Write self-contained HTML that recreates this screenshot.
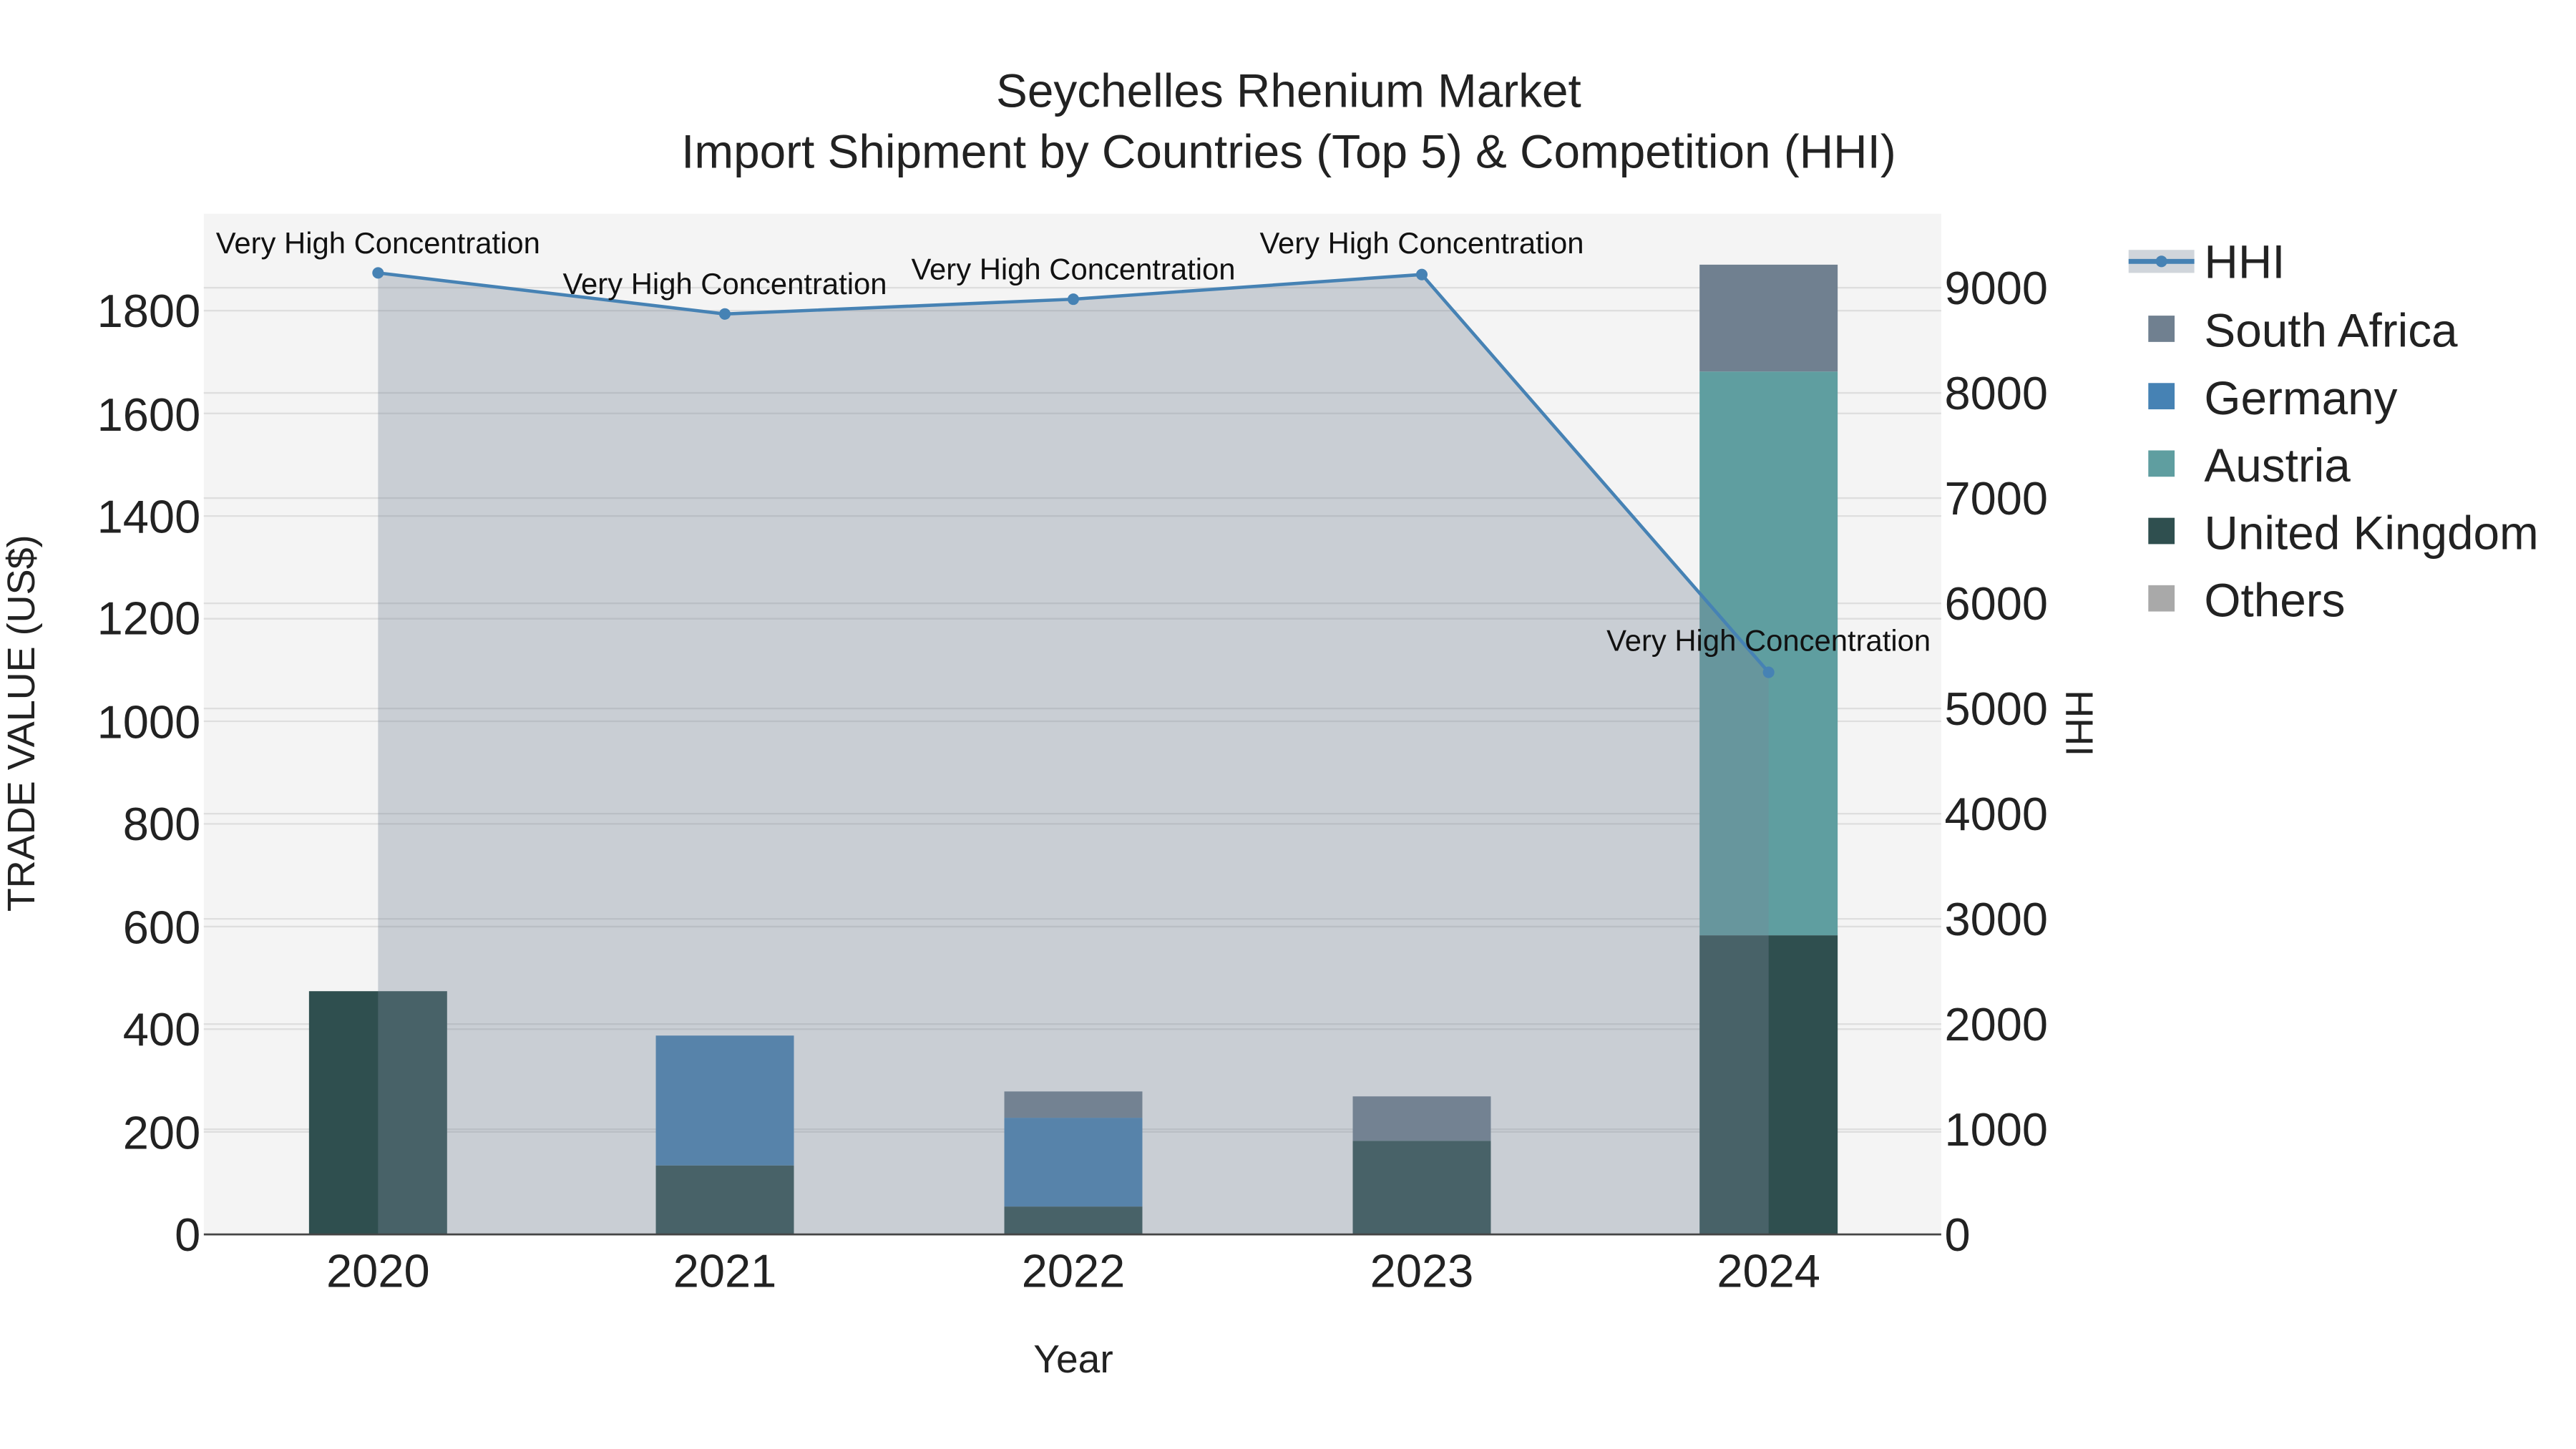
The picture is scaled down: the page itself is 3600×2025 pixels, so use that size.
<!DOCTYPE html>
<html><head><meta charset="utf-8"><style>
html,body{margin:0;padding:0;background:#fff;}
svg{display:block;font-family:"Liberation Sans",Arial,sans-serif;}
</style></head><body>
<svg width="3600" height="2025" viewBox="0 0 1567.2 881.5" xmlns="http://www.w3.org/2000/svg">
<rect x="0" y="0" width="1570" height="885" fill="#fff"/>
<rect x="124" y="130" width="1057" height="621" fill="#f4f4f4"/>
<g stroke="#dedede" stroke-width="1">
<line x1="124" x2="1181" y1="688.6" y2="688.6"/><line x1="124" x2="1181" y1="626.1" y2="626.1"/>
<line x1="124" x2="1181" y1="563.7" y2="563.7"/><line x1="124" x2="1181" y1="501.2" y2="501.2"/>
<line x1="124" x2="1181" y1="438.8" y2="438.8"/><line x1="124" x2="1181" y1="376.4" y2="376.4"/>
<line x1="124" x2="1181" y1="313.9" y2="313.9"/><line x1="124" x2="1181" y1="251.5" y2="251.5"/>
<line x1="124" x2="1181" y1="189" y2="189"/>
<line x1="124" x2="1181" y1="687" y2="687"/><line x1="124" x2="1181" y1="623" y2="623"/>
<line x1="124" x2="1181" y1="559" y2="559"/><line x1="124" x2="1181" y1="495" y2="495"/>
<line x1="124" x2="1181" y1="431" y2="431"/><line x1="124" x2="1181" y1="367" y2="367"/>
<line x1="124" x2="1181" y1="303" y2="303"/><line x1="124" x2="1181" y1="239" y2="239"/>
<line x1="124" x2="1181" y1="175" y2="175"/>
</g>
<rect x="188" y="603" width="84" height="148" fill="#2f4f4f"/>
<rect x="399" y="709" width="84" height="42" fill="#2f4f4f"/>
<rect x="399" y="630" width="84" height="79" fill="#4682b4"/>
<rect x="611" y="734" width="84" height="17" fill="#2f4f4f"/>
<rect x="611" y="680" width="84" height="54" fill="#4682b4"/>
<rect x="611" y="664" width="84" height="16" fill="#708090"/>
<rect x="823" y="694" width="84" height="57" fill="#2f4f4f"/>
<rect x="823" y="667" width="84" height="27" fill="#708090"/>
<rect x="1034" y="569" width="84" height="182" fill="#2f4f4f"/>
<rect x="1034" y="226" width="84" height="343" fill="#5f9ea0"/>
<rect x="1034" y="161" width="84" height="65" fill="#708090"/>
<path d="M230,751 L230,166 L441,191 L653,182 L865,167 L1076,409 L1076,751 Z" fill="rgb(119,136,153)" fill-opacity="0.35"/>
<line x1="124" x2="1181" y1="751" y2="751" stroke="#444" stroke-width="1.2"/>
<polyline points="230,166 441,191 653,182 865,167 1076,409" fill="none" stroke="#4682b4" stroke-width="2"/>
<g fill="#4682b4"><circle cx="230" cy="166" r="3.5"/><circle cx="441" cy="191" r="3.5"/><circle cx="653" cy="182" r="3.5"/><circle cx="865" cy="167" r="3.5"/><circle cx="1076" cy="409" r="3.5"/></g>
<g font-size="18.2" fill="#111" text-anchor="middle">
<text x="230" y="154">Very High Concentration</text>
<text x="441" y="179">Very High Concentration</text>
<text x="653" y="170">Very High Concentration</text>
<text x="865" y="154">Very High Concentration</text>
<text x="1076" y="396">Very High Concentration</text>
</g>
<g font-size="28.3" fill="#222" text-anchor="end">
<text x="122" y="761">0</text><text x="122" y="699">200</text><text x="122" y="636">400</text>
<text x="122" y="574">600</text><text x="122" y="511">800</text><text x="122" y="449">1000</text>
<text x="122" y="386">1200</text><text x="122" y="324">1400</text><text x="122" y="262">1600</text>
<text x="122" y="199">1800</text>
</g>
<g font-size="28.3" fill="#222" text-anchor="start">
<text x="1183" y="761">0</text><text x="1183" y="697">1000</text><text x="1183" y="633">2000</text>
<text x="1183" y="569">3000</text><text x="1183" y="505">4000</text><text x="1183" y="441">5000</text>
<text x="1183" y="377">6000</text><text x="1183" y="313">7000</text><text x="1183" y="249">8000</text>
<text x="1183" y="185">9000</text>
</g>
<g font-size="28.3" fill="#222" text-anchor="middle">
<text x="230" y="783">2020</text><text x="441" y="783">2021</text><text x="653" y="783">2022</text>
<text x="865" y="783">2023</text><text x="1076" y="783">2024</text>
</g>
<text x="653" y="835" font-size="24" fill="#222" text-anchor="middle">Year</text>
<text transform="translate(21,440) rotate(-90)" font-size="23.5" fill="#222" text-anchor="middle">TRADE VALUE (US$)</text>
<text transform="translate(1257,440) rotate(90)" font-size="23.5" fill="#222" text-anchor="middle">HHI</text>
<g font-size="28.6" fill="#222" text-anchor="middle">
<text x="784" y="65">Seychelles Rhenium Market</text>
<text x="784" y="102">Import Shipment by Countries (Top 5) &amp; Competition (HHI)</text>
</g>
<rect x="1295" y="152" width="40" height="14" fill="rgb(119,136,153)" fill-opacity="0.35"/>
<line x1="1295" x2="1335" y1="159" y2="159" stroke="#4682b4" stroke-width="3"/>
<circle cx="1315" cy="159" r="3.5" fill="#4682b4"/>
<rect x="1307" y="192" width="16" height="16" fill="#708090"/>
<rect x="1307" y="233" width="16" height="16" fill="#4682b4"/>
<rect x="1307" y="274" width="16" height="16" fill="#5f9ea0"/>
<rect x="1307" y="315" width="16" height="16" fill="#2f4f4f"/>
<rect x="1307" y="356" width="16" height="16" fill="#a9a9a9"/>
<g font-size="28.6" fill="#222">
<text x="1341" y="169">HHI</text>
<text x="1341" y="211">South Africa</text>
<text x="1341" y="252">Germany</text>
<text x="1341" y="293">Austria</text>
<text x="1341" y="334">United Kingdom</text>
<text x="1341" y="375">Others</text>
</g>
</svg>
</body></html>
